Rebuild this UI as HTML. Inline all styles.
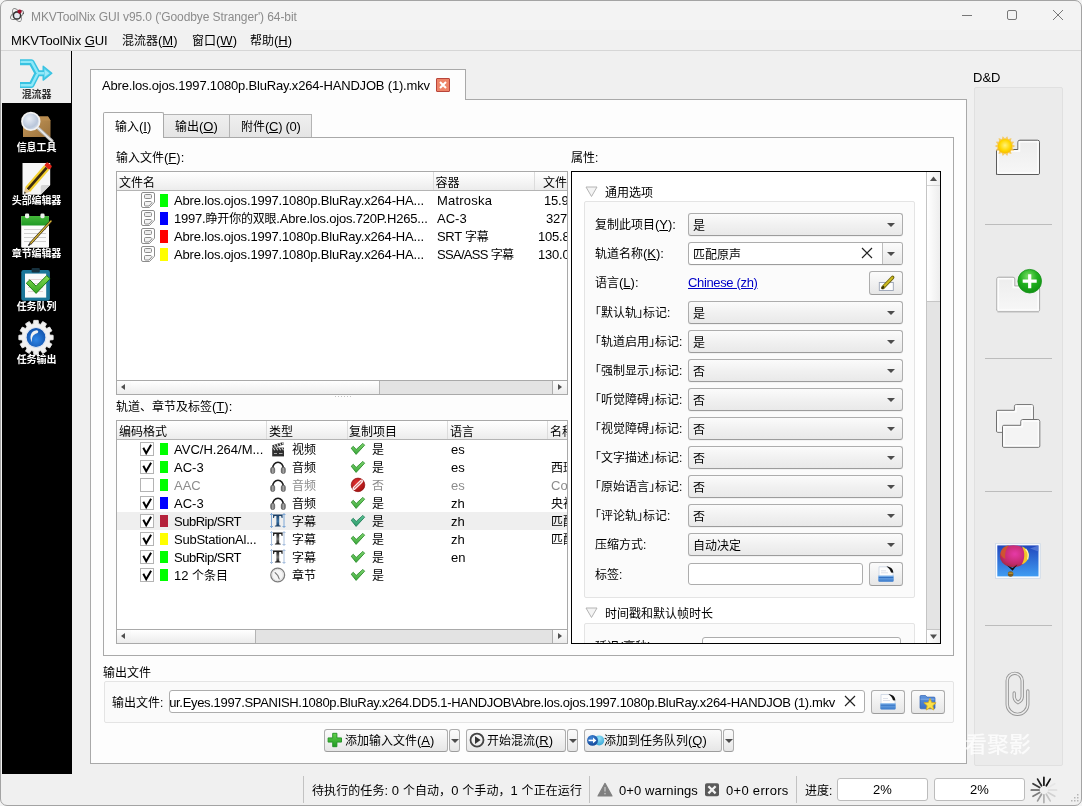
<!DOCTYPE html>
<html lang="zh-CN">
<head>
<meta charset="utf-8">
<title>MKVToolNix GUI v95.0 ('Goodbye Stranger') 64-bit</title>
<style>
html,body{margin:0;padding:0}
body{width:1082px;height:806px;position:relative;overflow:hidden;background:#f0f0f0;
 font-family:"Liberation Sans","Noto Sans CJK SC",sans-serif;font-size:12px;color:#000}
.a{position:absolute;box-sizing:border-box}
.t{position:absolute;white-space:nowrap;line-height:16px;height:16px}
.L{font-size:13px}
u{text-decoration:underline;text-underline-offset:1px}
svg{position:absolute;overflow:visible}
/* window frame */
#win{left:0;top:0;width:1082px;height:806px;background:#f0f0f0;overflow:hidden;will-change:transform}
#frame{left:0;top:0;width:1082px;height:806px;border:1px solid #a3a3a3;border-radius:7px;box-shadow:0 0 0 8px #f4f4f4;pointer-events:none}
#title{left:0;top:0;width:1082px;height:30px;background:#f3f3f3}
#menubar{left:0;top:30px;width:1082px;height:20px;background:#f1f1f1;border-bottom:1px solid #d6d6d6;height:21px}
/* sidebar */
#side{left:2px;top:51px;width:70px;height:723px;background:#000}
#sidesel{left:2px;top:51px;width:69px;height:52px;background:#efefef}
.sl{position:absolute;margin-top:1px;left:2px;width:69px;text-align:center;color:#fff;font-size:10px;font-weight:bold;line-height:14px;white-space:nowrap;letter-spacing:-0.1px}
/* panes */
.pane{background:#fdfdfd;border:1px solid #a9a9a9}
.tab{border:1px solid #b4b4b4;border-bottom:none;background:linear-gradient(#efefef,#e4e4e4)}
.tabsel{background:#fdfdfd;border:1px solid #a9a9a9;border-bottom:none}
/* lists */
.lst{background:#fff;border:1px solid #a9a9a9;overflow:hidden}
.hdr{background:linear-gradient(#ffffff,#f4f4f4 60%,#ececec);border-bottom:1px solid #b4b4b4}
.hs{top:0;width:1px;height:18px;background:#dcdcdc}
.row{position:absolute;left:0;width:450px;height:18px;white-space:nowrap;line-height:18px}
.row>span,.row>i{position:absolute;top:0;display:block}
.row>span{top:1px}
.row.sel{background:#efefef}
.row.dis{color:#8c8c8c}
.sw{left:43px;top:3px !important;width:8px;height:13px}
.c1{left:57px}.c2{left:320px}.c3{letter-spacing:-.2px}
.ty{left:175px}.cy{left:255px}.lg{left:334px}.nm{left:434px}
.dc{left:24px;top:1px !important;width:14px;height:16px}
.ti{left:153px;top:1px !important;width:16px;height:16px}
.ci{left:233px;top:1px !important;width:16px;height:16px}
.doc{left:25px;top:2px !important;width:12px;height:13px;border:1px solid #b9b9b9;border-radius:2px;box-sizing:border-box;background:#fff}
.doc:before{content:"";position:absolute;left:2px;top:2px;width:5px;height:3px;border:1px solid #c4c4c4}
.doc:after{content:"";position:absolute;right:-1px;bottom:-1px;width:4px;height:4px;background:linear-gradient(135deg,#c9c9c9 0 50%,#fff 50%)}
.cb{left:23px;top:2px !important;width:14px;height:14px;border:1px solid #b4b4b4;box-sizing:border-box;background:#fff}
.cb~.sw{height:12px}
.hsb{height:14px;background:#e3e3e3;border-top:1px solid #a9a9a9}
.hsb i{position:absolute;top:0;height:13px;display:block}
.sbl,.sbr{width:14px;background:linear-gradient(#fdfdfd,#ececec)}
.sbl{left:0;border-right:1px solid #adadad}.sbr{right:0;border-left:1px solid #adadad}
.sbl:after,.sbr:after{content:"";position:absolute;top:3px;border:3.5px solid transparent}
.sbl:after{border-right:4px solid #505050;border-left:none;left:4px}
.sbr:after{left:5px;border-left:4px solid #505050;border-right:none}
.sbt{background:linear-gradient(#ffffff,#ececec);border-right:1px solid #b4b4b4}
/* properties */
.gb{border:1px solid #e4e4e4;background:#fbfbfb;border-radius:2px}
.cmb{border:1px solid #adadad;border-bottom-color:#9c9c9c;border-radius:3px;background:linear-gradient(#fbfbfb,#f1f1f1 50%,#e9e9e9);box-shadow:0 1px 0 rgba(0,0,0,.04)}
.cmb span{position:absolute;left:4px;top:4px;line-height:16px;white-space:nowrap}
.cmb i{position:absolute;right:7px;top:9px;border:4px solid transparent;border-top:4px solid #4c4c4c;border-bottom:none;width:0;height:0}
.cmb.ed{background:#fff}
.cmb.ed b{position:absolute;right:0;top:0;width:19px;height:21px;border-left:1px solid #bdbdbd;background:linear-gradient(#fbfbfb,#e9e9e9);border-radius:0 2px 2px 0}
.fld{border:1px solid #adadad;border-radius:3px;background:#fff}
.btn{border:1px solid #adadad;border-bottom-color:#9c9c9c;border-radius:3px;background:linear-gradient(#fbfbfb,#f1f1f1 50%,#e6e6e6)}
.hb{font-feature-settings:"halt" 1}
.t{margin-top:1px}
.btn.dd i{position:absolute;left:1px;top:9px;border:4px solid transparent;border-top:4px solid #4c4c4c;border-bottom:none;width:0;height:0}
.sepl{left:985px;width:67px;height:1px;background:#bcbcbc}
.vsep{top:776px;width:1px;height:27px;background:#c2c2c2}
.pb{border:1px solid #bcbcbc;border-radius:3px;background:#fff;text-align:center;line-height:22px}
</style>
</head>
<body>
<svg width="0" height="0" style="left:0;top:0">
<defs>
 <linearGradient id="gok" x1="0" y1="0" x2="0" y2="1"><stop offset="0" stop-color="#7fd46f"/><stop offset="1" stop-color="#3aa83a"/></linearGradient>
 <linearGradient id="goks" x1="0" y1="0" x2="0" y2="1"><stop offset="0" stop-color="#5fc495"/><stop offset="1" stop-color="#2b9a6a"/></linearGradient>
 <radialGradient id="gno" cx=".4" cy=".35" r=".75"><stop offset="0" stop-color="#e03030"/><stop offset="1" stop-color="#9c0f0f"/></radialGradient>
 <linearGradient id="gcup" x1="0" y1="0" x2="1" y2="0"><stop offset="0" stop-color="#555"/><stop offset=".5" stop-color="#aaa"/><stop offset="1" stop-color="#666"/></linearGradient>
 <linearGradient id="gT" x1="0" y1="0" x2="0" y2="1"><stop offset="0" stop-color="#111"/><stop offset=".55" stop-color="#777"/><stop offset="1" stop-color="#111"/></linearGradient>
 <linearGradient id="gTs" x1="0" y1="0" x2="0" y2="1"><stop offset="0" stop-color="#16395f"/><stop offset=".55" stop-color="#3d74a6"/><stop offset="1" stop-color="#16395f"/></linearGradient>
 <symbol id="i-doc" viewBox="0 0 14 16"><path d="M2 .5h10a1.5 1.5 0 0 1 1.500 1.500v8.200l-5 5.300h-6.500a1.500 1.500 0 0 1-1.500-1.500v-12a1.500 1.500 0 0 1 1.500-1.500z" fill="#fff" stroke="#8c8c8c"/><rect x="3.500" y="2.500" width="7" height="4" rx="1" fill="#ededed" stroke="#8c8c8c"/><path d="M4.500 9.500h5.500l1 1.200-3 3.300h-3.500a1 1 0 0 1-1-1v-2.500a1 1 0 0 1 1-1z" fill="#f3f3f3" stroke="#8c8c8c"/></symbol>
 <symbol id="i-vid" viewBox="0 0 16 16"><path d="M2.200 4.300l11-3.300.8 2.600-11 3.300z" fill="#2f2f2f"/><path d="M4.300 3.800l1.300 2.400M7 3l1.300 2.400M9.700 2.200l1.300 2.400M12.300 1.400l1 2.200" stroke="#e9e9e9" stroke-width="1.100"/><rect x="2.200" y="6.600" width="11.800" height="8.800" fill="#2f2f2f"/><path d="M3.300 7l1.600 2.200M6.200 7l1.600 2.200M9.100 7l1.600 2.200M12 7l1.500 2.200" stroke="#dcdcdc" stroke-width="1.100"/><path d="M4 12.500h3M9 12.500h3.500" stroke="#a9a9a9" stroke-width="1.200"/></symbol>
 <symbol id="i-aud" viewBox="0 0 16 16"><path d="M2.700 9.500a5.300 6.300 0 0 1 10.600 0" fill="none" stroke="#1c1c1c" stroke-width="1.600"/><rect x=".7" y="8.200" width="4" height="6.300" rx="1.700" fill="url(#gcup)" stroke="#4a4a4a" stroke-width=".6"/><rect x="11.300" y="8.200" width="4" height="6.300" rx="1.700" fill="url(#gcup)" stroke="#4a4a4a" stroke-width=".6"/></symbol>
 <symbol id="i-sub" viewBox="0 0 16 16"><path d="M1.500 0v15M14 0v15M0 1.500h3M12.500 1.500h3M0 13.500h3M12.500 13.500h3" stroke="#a9c0de" stroke-width="1" fill="none"/><path d="M3 1.600h9.600v3.300h-1l-.5-1.900h-1.900v9.200l1.500.5v.9h-5.800v-.9l1.500-.5v-9.200h-1.900l-.5 1.900h-1z" fill="url(#gT)"/></symbol>
 <symbol id="i-subs" viewBox="0 0 16 16"><path d="M1.500 0v15M14 0v15M0 1.500h3M12.500 1.500h3M0 13.500h3M12.500 13.500h3" stroke="#7fa8d6" stroke-width="1" fill="none"/><path d="M3 1.600h9.600v3.300h-1l-.5-1.900h-1.900v9.200l1.500.5v.9h-5.800v-.9l1.500-.5v-9.200h-1.900l-.5 1.900h-1z" fill="url(#gTs)"/></symbol>
 <symbol id="i-chap" viewBox="0 0 16 16"><circle cx="7.700" cy="8" r="6.900" fill="#f6f6f6" stroke="#7d7d7d" stroke-width="1.300"/><circle cx="7.700" cy="8" r="5.600" fill="none" stroke="#d9d9d9" stroke-width=".8"/><path d="M7.700 8.300l-2.600-2.600M7.700 8.300l1.500 3.600" stroke="#777" stroke-width="1.100" fill="none" stroke-linecap="round"/></symbol>
 <symbol id="i-ok" viewBox="0 0 16 16"><path d="M1.200 7.200l2.100-1.900 2.900 3.200 6.700-6.100 1.700 1.800-8.500 9.200z" fill="url(#gok)" stroke="#2f8f2f" stroke-width=".9" stroke-linejoin="round"/></symbol>
 <symbol id="i-oks" viewBox="0 0 16 16"><path d="M1.200 7.200l2.100-1.900 2.900 3.200 6.700-6.100 1.700 1.800-8.500 9.200z" fill="url(#goks)" stroke="#23805a" stroke-width=".9" stroke-linejoin="round"/></symbol>
 <symbol id="i-no" viewBox="0 0 16 16"><circle cx="8" cy="7.900" r="6.800" fill="url(#gno)" stroke="#8e0d0d" stroke-width=".7"/><path d="M4.200 11.200l7.200-7.000" stroke="#fbeaea" stroke-width="3.400" stroke-linecap="round"/><path d="M4.400 11.000l6.800-6.600" stroke="#c62222" stroke-width=".9" stroke-linecap="round"/></symbol>
</defs></svg>
<div id="win" class="a">

<!-- title bar -->
<div id="title" class="a"></div>
<div class="t" style="left:31px;top:8px;color:#8b8b8b;font-size:12px;letter-spacing:-0.09px">MKVToolNix GUI v95.0 ('Goodbye Stranger') 64-bit</div>
<svg style="left:955px;top:5px" width="120" height="20" viewBox="0 0 120 20" fill="none" stroke="#777" stroke-width="1">
 <path d="M7 10.5h10"/><rect x="52.5" y="5.5" width="9" height="9" rx="1.5"/><path d="M98 5l10 10M108 5l-10 10"/>
</svg>

<!-- menu bar -->
<div id="menubar" class="a"></div>
<div class="t L" style="left:11px;top:32px;letter-spacing:-0.07px">MKVToolNix <u>G</u>UI</div>
<div class="t" style="left:122px;top:32px">混流器<span class="L">(<u>M</u>)</span></div>
<div class="t" style="left:192px;top:32px">窗口<span class="L">(<u>W</u>)</span></div>
<div class="t" style="left:250px;top:32px">帮助<span class="L">(<u>H</u>)</span></div>

<!-- sidebar -->
<div id="side" class="a"></div>
<div id="sidesel" class="a"></div>
<div class="sl" style="top:87px;color:#333">混流器</div>
<div class="sl" style="top:140px">信息工具</div>
<div class="sl" style="top:193px">头部编辑器</div>
<div class="sl" style="top:246px">章节编辑器</div>
<div class="sl" style="top:299px">任务队列</div>
<div class="sl" style="top:352px">任务输出</div>
<svg style="left:0;top:0" width="72" height="400" viewBox="0 0 72 400">
<defs>
 <linearGradient id="gcy" x1="0" y1="0" x2="0" y2="1"><stop offset="0" stop-color="#7fe3f6"/><stop offset="1" stop-color="#3cc6e4"/></linearGradient>
 <linearGradient id="gbox" x1="0" y1="0" x2="1" y2="1"><stop offset="0" stop-color="#c79a5b"/><stop offset="1" stop-color="#9a713c"/></linearGradient>
 <radialGradient id="glens" cx=".4" cy=".35" r=".7"><stop offset="0" stop-color="#e9eef6"/><stop offset=".7" stop-color="#b9c6da"/><stop offset="1" stop-color="#dfe5ee"/></radialGradient>
 <linearGradient id="ggrn" x1="0" y1="0" x2="0" y2="1"><stop offset="0" stop-color="#46b83a"/><stop offset="1" stop-color="#1f9a25"/></linearGradient>
 <linearGradient id="gchk" x1="0" y1="0" x2="0" y2="1"><stop offset="0" stop-color="#8ade58"/><stop offset="1" stop-color="#2fa31c"/></linearGradient>
 <radialGradient id="gblu" cx=".5" cy=".6" r=".6"><stop offset="0" stop-color="#2f86e6"/><stop offset="1" stop-color="#0f4fa8"/></radialGradient>
</defs>
<!-- merge -->
<g fill="none" stroke-linejoin="round" stroke-linecap="butt">
 <path d="M20 62.200h11.500l6 11M20 85h11.500l6-11.800M37 73.200h7" stroke="#38c3e2" stroke-width="6"/>
 <path d="M43.2 66.3l8.6 6.9-8.6 6.9z" fill="#56d0ea" stroke="#38c3e2" stroke-width="1.4"/>
 <path d="M20.500 61.900h11.200l6 11.100M20.500 85.300h11.200l5.600-11M37 73.200h7" stroke="#8fe8f8" stroke-width="2.400"/>
 <path d="M44.6 69.4l4.8 3.8-4.8 3.8z" fill="#9deafa" stroke="none"/>
</g>
<!-- info tool -->
<path d="M23 116.5h25l2.5 4v16.5h-27.5z" fill="url(#gbox)"/>
<path d="M23 116.5h25l2.5 4h-27.5z" fill="#b98c50"/>
<path d="M38 128l14 13" stroke="#b9b9b9" stroke-width="3.2" stroke-linecap="round"/>
<path d="M38 128l14 13" stroke="#efefef" stroke-width="1.2" stroke-linecap="round"/>
<circle cx="30.8" cy="121.4" r="8.8" fill="url(#glens)" stroke="#f2f2f2" stroke-width="1.8"/>
<!-- header editor -->
<path d="M22.5 163h27.7v22l-9.5 9.7h-18.2z" fill="#f6f6f6"/>
<path d="M50.2 185l-9.5 9.7v-7.5a2 2 0 0 1 2-2.2z" fill="#d4d4d4"/>
<g transform="rotate(-49 38.5 177)">
 <rect x="22" y="173.6" width="29" height="6.8" fill="#f3cf2b"/>
 <rect x="22" y="175.7" width="29" height="2.6" fill="#3a2a12"/>
 <rect x="51" y="173.6" width="4.6" height="6.8" rx="1.2" fill="#e02418"/>
 <path d="M22 173.6l-5.6 3.4 5.6 3.4z" fill="#e7c88f"/>
 <path d="M18.4 175.8l-2 1.2 2 1.2z" fill="#333"/>
</g>
<!-- chapter editor -->
<rect x="21.2" y="216" width="27.8" height="31.8" rx="1.2" fill="#fbfbfb"/>
<path d="M21.2 225.4v-8.2a1.2 1.2 0 0 1 1.2-1.2h25.4a1.2 1.2 0 0 1 1.2 1.2v8.2z" fill="url(#ggrn)"/>
<rect x="25" y="213.6" width="4.2" height="4.6" rx="1.4" fill="#eef3ee"/><rect x="40.4" y="213.6" width="4.2" height="4.6" rx="1.4" fill="#eef3ee"/>
<path d="M24 229.5h22M24 233.5h22M24 237.5h22M24 241.5h22" stroke="#cfcfcf" stroke-width="1.1"/>
<path d="M51.4 220.6l-21.3 23.3" stroke="#3a2a12" stroke-width="2.4"/>
<path d="M51.4 220.6l-21.3 23.3" stroke="#e8c63a" stroke-width="1.1"/>
<path d="M30.4 243.5l-2 2.2" stroke="#222" stroke-width="1.6"/>
<!-- job queue -->
<rect x="21.3" y="270" width="28.6" height="30.8" rx="2.2" fill="#1b7699"/>
<rect x="25" y="273.6" width="21.2" height="24" fill="#fafafa"/>
<rect x="31.6" y="268" width="8.2" height="4.6" rx="1" fill="#17313e"/>
<path d="M28 279.5h15M28 283.5h15M28 287.5h15M28 291.5h15" stroke="#e3d4d4" stroke-width="1"/>
<path d="M26.3 283.2l3.6-3.4 6.2 6.4 10.6-10.6 3.4 3.2-14 14.6z" fill="url(#gchk)" stroke="#1d7d14" stroke-width="1"/>
<!-- job output -->
<path d="M49.8 335.1 L53.1 335.3 L53.1 339.7 L49.8 339.9 L49.1 342.3 L51.9 344.2 L49.7 347.9 L46.7 346.5 L45.0 348.2 L46.4 351.2 L42.7 353.4 L40.8 350.6 L38.4 351.3 L38.2 354.6 L33.8 354.6 L33.6 351.3 L31.2 350.6 L29.3 353.4 L25.6 351.2 L27.0 348.2 L25.3 346.5 L22.3 347.9 L20.1 344.2 L22.9 342.3 L22.2 339.9 L18.9 339.7 L18.9 335.3 L22.2 335.1 L22.9 332.7 L20.1 330.8 L22.3 327.1 L25.3 328.5 L27.0 326.8 L25.6 323.8 L29.3 321.6 L31.2 324.4 L33.6 323.7 L33.8 320.4 L38.2 320.4 L38.4 323.7 L40.8 324.4 L42.7 321.6 L46.4 323.8 L45.0 326.8 L46.7 328.5 L49.7 327.1 L51.9 330.8 L49.1 332.7Z" fill="#f1f1f1" stroke="#e4e4e4" stroke-width="1" stroke-linejoin="round"/>
<circle cx="36" cy="337.5" r="10" fill="url(#gblu)" stroke="#dfe6f2" stroke-width="1.2"/>
<path d="M36.6 330.2c-5.6.6-7.8 6.4-4.6 12.2-.6-5 1.2-8.2 5-9.2 1.6-.6 1.8-2.8-.4-3z" fill="#f3f3f3"/>
</svg>


<!-- outer tab widget -->
<div class="a pane" style="left:90px;top:99px;width:877px;height:665px"></div>
<div class="a tabsel" style="left:90px;top:69px;width:376px;height:31px"></div>
<div class="t L" style="left:102px;top:77px;letter-spacing:-0.18px">Abre.los.ojos.1997.1080p.BluRay.x264-HANDJOB (1).mkv</div>
<div class="a" style="left:436px;top:78px;width:14px;height:14px;background:#ee8468;border:1px solid #b8443a;border-radius:1px"></div>
<svg style="left:436px;top:78px" width="14" height="14" viewBox="0 0 14 14" stroke="#fff" stroke-width="2" fill="none"><path d="M4 4l6 6M10 4l-6 6"/></svg>

<!-- inner tab widget -->
<div class="a pane" style="left:103px;top:137px;width:851px;height:519px"></div>
<div class="a tab" style="left:163px;top:114px;width:67px;height:23px"></div>
<div class="a tab" style="left:229px;top:114px;width:83px;height:23px"></div>
<div class="a tabsel" style="left:103px;top:112px;width:61px;height:26px;border-radius:2px 2px 0 0"></div>
<div class="t" style="left:115px;top:118px">输入<span class="L">(<u>I</u>)</span></div>
<div class="t" style="left:175px;top:118px">输出<span class="L">(<u>O</u>)</span></div>
<div class="t" style="left:241px;top:118px">附件<span class="L" style="letter-spacing:-.3px">(<u>C</u>) (0)</span></div>

<!-- input files list -->
<div class="t" style="left:116px;top:149px">输入文件<span class="L">(<u>F</u>):</span></div>
<div class="t" style="left:571px;top:149px">属性:</div>
<div class="a lst" style="left:116px;top:171px;width:452px;height:224px">
 <div class="a hdr" style="left:0;top:0;width:450px;height:19px"></div>
 <div class="a hs" style="left:316px"></div><div class="a hs" style="left:417px"></div>
 <div class="t" style="left:2px;top:2px">文件名</div>
 <div class="t" style="left:318.5px;top:2px">容器</div>
 <div class="t" style="left:426px;top:2px">文件</div>
 <div class="row" style="top:19px"><i class="dc"><svg width="14" height="16" style="left:0;top:0"><use href="#i-doc"/></svg></i><i class="sw" style="background:#00ff00"></i><span class="c1 L" style="letter-spacing:-0.17px">Abre.los.ojos.1997.1080p.BluRay.x264-HA...</span><span class="c2 L" style="letter-spacing:.2px">Matroska</span><span class="c3 L" style="left:427px">15.9 GiB</span></div>
 <div class="row" style="top:37px"><i class="dc"><svg width="14" height="16" style="left:0;top:0"><use href="#i-doc"/></svg></i><i class="sw" style="background:#0000ff"></i><span class="c1 L" style="letter-spacing:-0.2px">1997.<span style="font-size:12px">睁开你的双眼</span>.Abre.los.ojos.720P.H265...</span><span class="c2 L">AC-3</span><span class="c3 L" style="left:429px">327.4 MiB</span></div>
 <div class="row" style="top:55px"><i class="dc"><svg width="14" height="16" style="left:0;top:0"><use href="#i-doc"/></svg></i><i class="sw" style="background:#ff0000"></i><span class="c1 L" style="letter-spacing:-0.17px">Abre.los.ojos.1997.1080p.BluRay.x264-HA...</span><span class="c2 L" style="letter-spacing:-.3px">SRT <span style="font-size:12px">字幕</span></span><span class="c3 L" style="left:421px">105.8 KiB</span></div>
 <div class="row" style="top:73px"><i class="dc"><svg width="14" height="16" style="left:0;top:0"><use href="#i-doc"/></svg></i><i class="sw" style="background:#ffff00"></i><span class="c1 L" style="letter-spacing:-0.17px">Abre.los.ojos.1997.1080p.BluRay.x264-HA...</span><span class="c2 L" style="letter-spacing:-.7px">SSA/ASS <span style="font-size:12px">字幕</span></span><span class="c3 L" style="left:421px">130.0 KiB</span></div>
 <div class="a hsb" style="left:0;top:208px;width:450px"><i class="sbl"></i><i class="sbt" style="left:14px;width:248px"></i><i class="sbr"></i></div>
</div>
<!-- splitter dots -->
<div class="a" style="left:335px;top:396px;width:18px;height:1px;background:repeating-linear-gradient(90deg,#c4c4c4 0 1px,transparent 1px 3px)"></div>

<!-- tracks list -->
<div class="t" style="left:116px;top:398px">轨道、章节及标签<span class="L">(<u>T</u>):</span></div>
<div class="a lst" style="left:116px;top:420px;width:452px;height:224px">
 <div class="a hdr" style="left:0;top:0;width:450px;height:19px"></div>
 <div class="a hs" style="left:149px"></div><div class="a hs" style="left:230px"></div><div class="a hs" style="left:330px"></div><div class="a hs" style="left:430px"></div>
 <div class="t" style="left:2px;top:2px">编码格式</div>
 <div class="t" style="left:152px;top:2px">类型</div>
 <div class="t" style="left:232px;top:2px">复制项目</div>
 <div class="t" style="left:333px;top:2px">语言</div>
 <div class="t" style="left:433px;top:2px">名称</div>
 <div class="row" style="top:19px"><i class="cb on"><svg width="12" height="12" viewBox="0 0 12 12" style="left:0;top:0"><path d="M2.300 4.800l2.900 5.400 4.900-8.400" fill="none" stroke="#000" stroke-width="2" stroke-linejoin="miter"/></svg></i><i class="sw" style="background:#00ff00"></i><span class="c1 L">AVC/H.264/M...</span><i class="ti"><svg width="16" height="16" style="left:0;top:0"><use href="#i-vid"/></svg></i><span class="ty">视频</span><i class="ci"><svg width="16" height="16" style="left:0;top:0"><use href="#i-ok"/></svg></i><span class="cy">是</span><span class="lg L">es</span></div>
 <div class="row" style="top:37px"><i class="cb on"><svg width="12" height="12" viewBox="0 0 12 12" style="left:0;top:0"><path d="M2.300 4.800l2.900 5.400 4.900-8.400" fill="none" stroke="#000" stroke-width="2" stroke-linejoin="miter"/></svg></i><i class="sw" style="background:#00ff00"></i><span class="c1 L">AC-3</span><i class="ti"><svg width="16" height="16" style="left:0;top:0"><use href="#i-aud"/></svg></i><span class="ty">音频</span><i class="ci"><svg width="16" height="16" style="left:0;top:0"><use href="#i-ok"/></svg></i><span class="cy">是</span><span class="lg L">es</span><span class="nm">西班牙语</span></div>
 <div class="row dis" style="top:55px"><i class="cb"></i><i class="sw" style="background:#00ff00"></i><span class="c1 L">AAC</span><i class="ti"><svg width="16" height="16" style="left:0;top:0"><use href="#i-aud"/></svg></i><span class="ty">音频</span><i class="ci"><svg width="16" height="16" style="left:0;top:0"><use href="#i-no"/></svg></i><span class="cy">否</span><span class="lg L">es</span><span class="nm L">Commentary</span></div>
 <div class="row" style="top:73px"><i class="cb on"><svg width="12" height="12" viewBox="0 0 12 12" style="left:0;top:0"><path d="M2.300 4.800l2.900 5.400 4.900-8.400" fill="none" stroke="#000" stroke-width="2" stroke-linejoin="miter"/></svg></i><i class="sw" style="background:#0000ff"></i><span class="c1 L">AC-3</span><i class="ti"><svg width="16" height="16" style="left:0;top:0"><use href="#i-aud"/></svg></i><span class="ty">音频</span><i class="ci"><svg width="16" height="16" style="left:0;top:0"><use href="#i-ok"/></svg></i><span class="cy">是</span><span class="lg L">zh</span><span class="nm">央视国语</span></div>
 <div class="row sel" style="top:91px"><i class="cb on"><svg width="12" height="12" viewBox="0 0 12 12" style="left:0;top:0"><path d="M2.300 4.800l2.900 5.400 4.900-8.400" fill="none" stroke="#000" stroke-width="2" stroke-linejoin="miter"/></svg></i><i class="sw" style="background:#b5223c"></i><span class="c1 L" style="letter-spacing:-.5px">SubRip/SRT</span><i class="ti"><svg width="16" height="16" style="left:0;top:0"><use href="#i-subs"/></svg></i><span class="ty">字幕</span><i class="ci"><svg width="16" height="16" style="left:0;top:0"><use href="#i-oks"/></svg></i><span class="cy">是</span><span class="lg L">zh</span><span class="nm">匹配原声</span></div>
 <div class="row" style="top:109px"><i class="cb on"><svg width="12" height="12" viewBox="0 0 12 12" style="left:0;top:0"><path d="M2.300 4.800l2.900 5.400 4.900-8.400" fill="none" stroke="#000" stroke-width="2" stroke-linejoin="miter"/></svg></i><i class="sw" style="background:#ffff00"></i><span class="c1 L" style="letter-spacing:-.25px">SubStationAl...</span><i class="ti"><svg width="16" height="16" style="left:0;top:0"><use href="#i-sub"/></svg></i><span class="ty">字幕</span><i class="ci"><svg width="16" height="16" style="left:0;top:0"><use href="#i-ok"/></svg></i><span class="cy">是</span><span class="lg L">zh</span><span class="nm">匹配央视</span></div>
 <div class="row" style="top:127px"><i class="cb on"><svg width="12" height="12" viewBox="0 0 12 12" style="left:0;top:0"><path d="M2.300 4.800l2.900 5.400 4.900-8.400" fill="none" stroke="#000" stroke-width="2" stroke-linejoin="miter"/></svg></i><i class="sw" style="background:#00ff00"></i><span class="c1 L" style="letter-spacing:-.5px">SubRip/SRT</span><i class="ti"><svg width="16" height="16" style="left:0;top:0"><use href="#i-sub"/></svg></i><span class="ty">字幕</span><i class="ci"><svg width="16" height="16" style="left:0;top:0"><use href="#i-ok"/></svg></i><span class="cy">是</span><span class="lg L">en</span></div>
 <div class="row" style="top:145px"><i class="cb on"><svg width="12" height="12" viewBox="0 0 12 12" style="left:0;top:0"><path d="M2.300 4.800l2.900 5.400 4.900-8.400" fill="none" stroke="#000" stroke-width="2" stroke-linejoin="miter"/></svg></i><i class="sw" style="background:#00ff00"></i><span class="c1 L">12 <span style="font-size:12px">个条目</span></span><i class="ti"><svg width="16" height="16" style="left:0;top:0"><use href="#i-chap"/></svg></i><span class="ty">章节</span><i class="ci"><svg width="16" height="16" style="left:0;top:0"><use href="#i-ok"/></svg></i><span class="cy">是</span></div>
 <div class="a hsb" style="left:0;top:208px;width:450px"><i class="sbl"></i><i class="sbt" style="left:14px;width:124px"></i><i class="sbr"></i></div>
</div>

<!-- properties panel -->
<div class="a" id="props" style="left:571px;top:171px;width:370px;height:473px;border:1px solid #000;background:#fff;overflow:hidden">
<div class="a" style="left:-572px;top:-172px;width:0;height:0">
 <svg style="left:585px;top:186px" width="13" height="12" viewBox="0 0 13 12"><path d="M1 1h11l-5.5 9.5z" fill="#f4f4f4" stroke="#b4b4b4"/></svg>
 <div class="t" style="left:605px;top:184px">通用选项</div>
 <div class="a gb" style="left:584px;top:201px;width:331px;height:397px"></div>
 <div class="t" style="left:595px;top:216px">复制此项目<span class="L">(<u>Y</u>):</span></div><div class="a cmb" style="left:688px;top:213px;width:215px;height:23px"><span>是</span><i></i></div>
 <div class="t" style="left:595px;top:304px"><span class="hb">「</span>默认轨<span class="hb">」</span>标记:</div><div class="a cmb" style="left:688px;top:301px;width:215px;height:23px"><span>是</span><i></i></div>
 <div class="t" style="left:595px;top:333px"><span class="hb">「</span>轨道启用<span class="hb">」</span>标记:</div><div class="a cmb" style="left:688px;top:330px;width:215px;height:23px"><span>是</span><i></i></div>
 <div class="t" style="left:595px;top:362px"><span class="hb">「</span>强制显示<span class="hb">」</span>标记:</div><div class="a cmb" style="left:688px;top:359px;width:215px;height:23px"><span>否</span><i></i></div>
 <div class="t" style="left:595px;top:391px"><span class="hb">「</span>听觉障碍<span class="hb">」</span>标记:</div><div class="a cmb" style="left:688px;top:388px;width:215px;height:23px"><span>否</span><i></i></div>
 <div class="t" style="left:595px;top:420px"><span class="hb">「</span>视觉障碍<span class="hb">」</span>标记:</div><div class="a cmb" style="left:688px;top:417px;width:215px;height:23px"><span>否</span><i></i></div>
 <div class="t" style="left:595px;top:449px"><span class="hb">「</span>文字描述<span class="hb">」</span>标记:</div><div class="a cmb" style="left:688px;top:446px;width:215px;height:23px"><span>否</span><i></i></div>
 <div class="t" style="left:595px;top:478px"><span class="hb">「</span>原始语言<span class="hb">」</span>标记:</div><div class="a cmb" style="left:688px;top:475px;width:215px;height:23px"><span>否</span><i></i></div>
 <div class="t" style="left:595px;top:507px"><span class="hb">「</span>评论轨<span class="hb">」</span>标记:</div><div class="a cmb" style="left:688px;top:504px;width:215px;height:23px"><span>否</span><i></i></div>
 <div class="t" style="left:595px;top:536px">压缩方式:</div><div class="a cmb" style="left:688px;top:533px;width:215px;height:23px"><span>自动决定</span><i></i></div>
 <div class="t" style="left:595px;top:245px">轨道名称<span class="L">(<u>K</u>):</span></div>
 <div class="a cmb ed" style="left:688px;top:242px;width:215px;height:23px"><span>匹配原声</span><b></b><i></i></div>
 <svg style="left:861px;top:247px" width="12" height="12" viewBox="0 0 12 12" stroke="#222" stroke-width="1.2" fill="none"><path d="M1 1l10 10M11 1l-10 10"/></svg>
 <div class="t" style="left:595px;top:274px">语言<span class="L">(<u>L</u>):</span></div>
 <div class="t L" style="left:688px;top:274px;color:#0000c8;text-decoration:underline;letter-spacing:-.35px">Chinese (zh)</div>
 <div class="a btn" style="left:869px;top:271px;width:34px;height:24px"></div>
 <div class="t" style="left:595px;top:566px">标签:</div>
 <div class="a fld" style="left:688px;top:563px;width:175px;height:22px"></div>
 <div class="a btn" style="left:869px;top:562px;width:34px;height:24px"></div>
 <svg style="left:585px;top:607px" width="13" height="12" viewBox="0 0 13 12"><path d="M1 1h11l-5.5 9.5z" fill="#f4f4f4" stroke="#b4b4b4"/></svg>
 <div class="t" style="left:605px;top:605px">时间戳和默认帧时长</div>
 <div class="a gb" style="left:584px;top:623px;width:331px;height:60px"></div>
 <div class="t" style="left:595px;top:638px">延迟<span class="L">(</span>毫秒<span class="L">):</span></div>
 <div class="a fld" style="left:702px;top:637px;width:199px;height:23px"></div>
 <!-- vertical scrollbar -->
 <div class="a" style="left:926px;top:172px;width:14px;height:471px;background:#e4e4e4;border-left:1px solid #c4c4c4"></div>
 <div class="a" style="left:927px;top:172px;width:13px;height:130px;background:linear-gradient(90deg,#fff,#ededed);border-bottom:1px solid #c6c6c6"></div>
 <div class="a" style="left:927px;top:185px;width:13px;height:1px;background:#d4d4d4"></div>
 <div class="a" style="left:927px;top:629px;width:13px;height:14px;background:linear-gradient(90deg,#fff,#ededed);border-top:1px solid #c6c6c6"></div>
 <svg style="left:927px;top:172px" width="13" height="13" viewBox="0 0 13 13"><path d="M3 9l3.5-4.5L10 9z" fill="#505050"/></svg>
 <svg style="left:927px;top:630px" width="13" height="13" viewBox="0 0 13 13"><path d="M3 4.5l3.5 4.5L10 4.5z" fill="#505050"/></svg>
</div>
</div>

<!-- output file -->
<div class="t" style="left:103px;top:664px">输出文件</div>
<div class="a gb" style="left:104px;top:681px;width:850px;height:42px;background:#fafafa"></div>
<div class="t" style="left:112px;top:694px">输出文件:</div>
<div class="a fld" style="left:169px;top:690px;width:696px;height:23px;overflow:hidden"><div class="t L" id="outp" style="right:29px;top:3px;letter-spacing:-.32px">C:\Movies\Open.Your.Eyes.1997.SPANISH.1080p.BluRay.x264.DD5.1-HANDJOB\Abre.los.ojos.1997.1080p.BluRay.x264-HANDJOB (1).mkv</div></div>
<svg style="left:844px;top:695px" width="12" height="12" viewBox="0 0 12 12" stroke="#222" stroke-width="1.2" fill="none"><path d="M1 1l10 10M11 1l-10 10"/></svg>
<div class="a btn" style="left:871px;top:690px;width:34px;height:24px"></div>
<div class="a btn" style="left:911px;top:690px;width:34px;height:24px"></div>

<!-- bottom buttons -->
<div class="a btn" style="left:324px;top:729px;width:124px;height:23px"></div>
<div class="a btn dd" style="left:449px;top:729px;width:11px;height:23px"><i></i></div>
<div class="a btn" style="left:466px;top:729px;width:100px;height:23px"></div>
<div class="a btn dd" style="left:567px;top:729px;width:11px;height:23px"><i></i></div>
<div class="a btn" style="left:584px;top:729px;width:138px;height:23px"></div>
<div class="a btn dd" style="left:723px;top:729px;width:11px;height:23px"><i></i></div>
<div class="t" style="left:345px;top:732px">添加输入文件<span class="L">(<u>A</u>)</span></div>
<div class="t" style="left:487px;top:732px">开始混流<span class="L">(<u>R</u>)</span></div>
<div class="t" style="left:604px;top:732px">添加到任务队列<span class="L">(<u>Q</u>)</span></div>

<!-- D&D panel -->
<div class="t L" style="left:973px;top:69px">D&amp;D</div>
<div class="a" style="left:974px;top:87px;width:89px;height:679px;background:#ebebeb;border:1px solid #e0e0e0;border-radius:2px"></div>
<div class="a sepl" style="top:224px"></div><div class="a sepl" style="top:358px"></div><div class="a sepl" style="top:491px"></div><div class="a sepl" style="top:625px"></div>
<div class="t" style="left:965px;top:732px;font-size:22px;line-height:24px;height:24px;color:#fff;font-weight:500;opacity:.8">看聚影</div>

<!-- status bar -->
<div class="a vsep" style="left:303px"></div><div class="a vsep" style="left:589px"></div><div class="a vsep" style="left:796px"></div>
<div class="t" style="left:312px;top:782px;letter-spacing:.08px">待执行的任务<span class="L">: 0 </span>个自动，<span class="L">0 </span>个手动，<span class="L">1 </span>个正在运行</div>
<div class="t L" style="left:619px;top:782px;letter-spacing:.1px">0+0 warnings</div>
<div class="t L" style="left:726px;top:782px;letter-spacing:.3px">0+0 errors</div>
<div class="t" style="left:805px;top:782px">进度:</div>
<div class="a pb" style="left:837px;top:778px;width:91px;height:23px"><span class="L">2%</span></div>
<div class="a pb" style="left:934px;top:778px;width:91px;height:23px"><span class="L">2%</span></div>
<svg style="left:0;top:0" width="1082" height="806" viewBox="0 0 1082 806">
<defs>
 <radialGradient id="gsun" cx=".5" cy=".45" r=".6"><stop offset="0" stop-color="#fff27a"/><stop offset=".6" stop-color="#ffd800"/><stop offset="1" stop-color="#f5b400"/></radialGradient>
 <linearGradient id="gdoc" x1="0" y1="0" x2="0" y2="1"><stop offset="0" stop-color="#ededed"/><stop offset="1" stop-color="#f7f7f7"/></linearGradient>
 <radialGradient id="ggplus" cx=".45" cy=".3" r=".8"><stop offset="0" stop-color="#7de06a"/><stop offset=".45" stop-color="#22b020"/><stop offset="1" stop-color="#0c8a10"/></radialGradient>
 <linearGradient id="gsky" x1="0" y1="0" x2="0" y2="1"><stop offset="0" stop-color="#2146bd"/><stop offset="1" stop-color="#3f9cf2"/></linearGradient>
 <radialGradient id="gbal" cx=".55" cy=".4" r=".65"><stop offset="0" stop-color="#e63aa8"/><stop offset=".7" stop-color="#c22a6a"/><stop offset="1" stop-color="#9a2c3a"/></radialGradient>
 <linearGradient id="gtray" x1="0" y1="0" x2="0" y2="1"><stop offset="0" stop-color="#7db2ea"/><stop offset="1" stop-color="#3a7acb"/></linearGradient>
 <linearGradient id="gfold" x1="0" y1="0" x2="0" y2="1"><stop offset="0" stop-color="#5d94de"/><stop offset="1" stop-color="#3a6fc4"/></linearGradient>
 <linearGradient id="gplus" x1="0" y1="0" x2="0" y2="1"><stop offset="0" stop-color="#63d24c"/><stop offset="1" stop-color="#1f9a22"/></linearGradient>
 <radialGradient id="gq1" cx=".4" cy=".3" r=".8"><stop offset="0" stop-color="#3f86d8"/><stop offset="1" stop-color="#0d3f90"/></radialGradient>
 <radialGradient id="gq2" cx=".5" cy=".3" r=".8"><stop offset="0" stop-color="#8fe0f6"/><stop offset="1" stop-color="#2e9ed2"/></radialGradient>
</defs>
<!-- app icon -->
<g fill="none"><ellipse cx="17" cy="15" rx="7.200" ry="3.400" transform="rotate(-28 17 15)" stroke="#777" stroke-width=".9"/><ellipse cx="17" cy="15" rx="7.200" ry="3.400" transform="rotate(62 17 15)" stroke="#888" stroke-width=".9"/><circle cx="17" cy="15.500" r="3.600" stroke="#333" stroke-width="1.500" fill="#e6eaf0"/><circle cx="19.600" cy="11.600" r="2.100" fill="#a00d2a"/><circle cx="23.200" cy="13.200" r=".7" fill="#444"/></g>
<!-- edit button icon -->
<rect x="879.300" y="282.500" width="14" height="8" fill="#fdfdfd" stroke="#9aa3b5" stroke-width=".9"/>
<path d="M892.600 277.400l-9.600 10" stroke="#6e6410" stroke-width="3.600" stroke-linecap="round"/><path d="M892.400 277.600l-9 9.400" stroke="#cdbb20" stroke-width="2" stroke-linecap="round"/><path d="M883.400 286.800l-1.200 1.400" stroke="#3a3208" stroke-width="1.800" stroke-linecap="round"/>
<!-- open icons -->
<g transform="translate(878 566.3)"><path d="M1 .5h8.500l5.500 5v9.500h-14z" fill="#fdfdfd" stroke="#c9d3e2" stroke-width=".8"/><path d="M8.500 .3c3.500 0 6.800 2.200 6.800 6.200l-2.300-.2c-.6-2.600-2.300-4.600-4.500-6z" fill="#111"/><path d="M3 4.500h5M3 6.500h7" stroke="#d9dde6" stroke-width=".9"/><path d="M.3 9.200h15.400v5a1.200 1.200 0 0 1-1.200 1.200h-13a1.200 1.200 0 0 1-1.200-1.200z" fill="url(#gtray)"/><path d="M.8 11.200h14.400" stroke="#2f6dbe" stroke-width=".9"/></g>
<g transform="translate(880 694)"><path d="M1 .5h8.500l5.500 5v9.500h-14z" fill="#fdfdfd" stroke="#c9d3e2" stroke-width=".8"/><path d="M8.500 .3c3.500 0 6.800 2.200 6.800 6.200l-2.300-.2c-.6-2.600-2.300-4.600-4.500-6z" fill="#111"/><path d="M3 4.500h5M3 6.500h7" stroke="#d9dde6" stroke-width=".9"/><path d="M.3 9.200h15.400v5a1.200 1.200 0 0 1-1.200 1.200h-13a1.200 1.200 0 0 1-1.200-1.200z" fill="url(#gtray)"/><path d="M.8 11.200h14.400" stroke="#2f6dbe" stroke-width=".9"/></g>
<!-- favourite folder -->
<path d="M920 696.500a1 1 0 0 1 1-1h4.500l1.500 1.600h7a1 1 0 0 1 1 1v9.700a1 1 0 0 1-1 1h-13a1 1 0 0 1-1-1z" fill="url(#gfold)" stroke="#3563b0" stroke-width=".7"/><path d="M920.500 699.200h14" stroke="#8fb6ea" stroke-width=".8"/>
<path d="M930.0 698.4 L931.7 702.5 L936.1 702.8 L932.8 705.7 L933.8 710.0 L930.0 707.7 L926.2 710.0 L927.2 705.7 L923.9 702.8 L928.3 702.5Z" fill="#fbe24a" stroke="#d8a81a" stroke-width=".8" stroke-linejoin="round"/>
<!-- bottom button icons -->
<path d="M332.700 733.300h4.200v4.600h4.600v4.200h-4.600v4.600h-4.200v-4.600h-4.600v-4.200h4.600z" fill="url(#gplus)" stroke="#1f8f22" stroke-width=".9" stroke-linejoin="round"/>
<circle cx="477" cy="740.100" r="6.500" fill="none" stroke="#444" stroke-width="1.800"/><path d="M475 736.300l5.600 3.800-5.600 3.800z" fill="#333"/>
<circle cx="599.200" cy="740.400" r="5" fill="url(#gq2)"/><circle cx="592.500" cy="740.400" r="5.400" fill="url(#gq1)"/><path d="M588.500 740.400h5" stroke="#fff" stroke-width="1.600"/><path d="M593 737.600l3.400 2.800-3.400 2.800z" fill="#fff"/>
<!-- D&D icons -->
<path d="M996.500 174.500v-23.500a1.500 1.500 0 0 1 1.500-1.500h19.900v-7.300a2 2 0 0 1 2-2h17.600a2 2 0 0 1 2 2v30.800a1.500 1.500 0 0 1-1.500 1.500h-40a1.500 1.500 0 0 1-1.500-1.500z" fill="url(#gdoc)" stroke="#5c5c5c" stroke-width="1"/>
<path d="M998 173v-22h21.400v-9.300h18.600v31.300z" fill="none" stroke="#fdfdfd" stroke-width="1.600"/>
<path d="M1015.2 146.1 L1012.4 147.8 L1014.2 150.5 L1010.9 150.8 L1011.4 154.1 L1008.3 152.9 L1007.3 156.0 L1005.0 153.7 L1002.7 156.0 L1001.7 152.9 L998.6 154.1 L999.1 150.8 L995.8 150.5 L997.6 147.8 L994.8 146.1 L997.6 144.4 L995.8 141.7 L999.1 141.4 L998.6 138.1 L1001.7 139.3 L1002.7 136.2 L1005.0 138.5 L1007.3 136.2 L1008.3 139.3 L1011.4 138.1 L1010.9 141.4 L1014.2 141.7 L1012.4 144.4Z" fill="#f7c44a" opacity=".85"/><circle cx="1005" cy="146.1" r="7.2" fill="url(#gsun)"/>
<path d="M996.800 310v-31a1.800 1.800 0 0 1 1.800-1.800h14.400a1.800 1.800 0 0 1 1.800 1.800v7h23a1.800 1.800 0 0 1 1.800 1.800v22a1.500 1.500 0 0 1-1.500 1.500h-39.800a1.500 1.500 0 0 1-1.500-1.500z" fill="url(#gdoc)" stroke="#a9a9a9" stroke-width="1"/>
<path d="M998.300 310v-31.300h15v8.800h24.800v22.500z" fill="none" stroke="#fdfdfd" stroke-width="1.600"/>
<path d="M997.500 312h41.500" stroke="#bdbdbd" stroke-width="1"/>
<circle cx="1029.700" cy="281.200" r="11.800" fill="url(#ggplus)" stroke="#159218" stroke-width=".8"/><path d="M1029.700 274.200v14M1022.700 281.200h14" stroke="#fff" stroke-width="3.200"/>
<path d="M996.500 431v-19.400a1.300 1.300 0 0 1 1.300-1.300h16.600v-3.700a2 2 0 0 1 2-2h15a2 2 0 0 1 2 2v24.400a1.300 1.300 0 0 1-1.300 1.300h-34.300a1.300 1.300 0 0 1-1.300-1.300z" fill="#f3f3f3" stroke="#6f6f6f" stroke-width="1"/>
<path d="M998 430.800v-19h18v-5.700h16v24.700z" fill="none" stroke="#fdfdfd" stroke-width="1.500"/>
<path d="M1002.500 446v-19.400a1.300 1.300 0 0 1 1.300-1.300h17v-3.800a2 2 0 0 1 2-2h15a2 2 0 0 1 2 2v24.500a1.300 1.300 0 0 1-1.300 1.300h-34.700a1.300 1.300 0 0 1-1.300-1.300z" fill="#f4f4f4" stroke="#6f6f6f" stroke-width="1"/>
<path d="M1004 445.800v-19h18.400v-5.800h16v24.800z" fill="none" stroke="#fdfdfd" stroke-width="1.500"/>
<rect x="995.500" y="543.700" width="44.700" height="34.600" fill="#fbfdff" stroke="#c9d6e6" stroke-width=".8"/>
<rect x="997.300" y="545.400" width="41.200" height="31" fill="url(#gsky)"/>
<path d="M1030 548.500l8.500-3.100v6z" fill="#6d8fe0" opacity=".6"/>
<ellipse cx="1013.500" cy="556.200" rx="13.600" ry="11" fill="url(#gbal)"/>
<path d="M1000.500 553c1-5 5-7.400 8.500-7.400-3 3-4.500 8-3.500 13.400-2.800-1-4.800-3-5-6z" fill="#d0582a" opacity=".9"/>
<path d="M1022 546.400c5 1.600 7.600 7 6 12.600-1.400 3-3.600 4.600-6.400 5.400 3-4.600 4-11.600.4-18z" fill="#f2c62a"/>
<path d="M1025.600 549c2.400 2.600 3.200 6.600 2 10.400" stroke="#fff3a8" stroke-width="1.300" fill="none"/>
<path d="M1007 565.400l5.600 2.600 5-3.800-5 6.500z" fill="#111"/>
<ellipse cx="1010.600" cy="574" rx="2.800" ry="2.700" fill="#7a5a1e"/><path d="M1008.500 573.200h4.200" stroke="#c8a53a" stroke-width="1.100"/>
<g fill="none" stroke-linecap="round"><path d="M1014.200 693v4.200q.4 3.400 3.800 5.400q3.800-2 4.200-5.400V680.800a7.500 7.500 0 0 0-15 0V704a10.300 10.300 0 0 0 20.600 0V691" stroke="#959595" stroke-width="3.300"/><path d="M1014.200 693v4.200q.4 3.400 3.800 5.400q3.800-2 4.200-5.400V680.800a7.500 7.500 0 0 0-15 0V704a10.300 10.300 0 0 0 20.600 0V691" stroke="#ececec" stroke-width="1.500"/></g>
<!-- status icons -->
<path d="M605 783.400l7 12.600h-14z" fill="#808080" stroke="#808080" stroke-width="1.200" stroke-linejoin="round"/><path d="M605 787v4.500" stroke="#bdbdbd" stroke-width="1.500"/><circle cx="605" cy="793.600" r=".9" fill="#bdbdbd"/>
<rect x="705" y="783.300" width="14" height="13" rx="1.800" fill="#5a5a5a"/><path d="M708.400 786.200l7.200 7.200M715.600 786.200l-7.200 7.200" stroke="#f3f3f3" stroke-width="2.300"/>
<g stroke-width="1.7" stroke-linecap="round" fill="none"><path d="M1043.9 785.2L1043.9 777.4" stroke="#111"/><path d="M1046.3 785.8L1050.2 779.1" stroke="#111"/><path d="M1048.1 787.6L1054.8 783.7" stroke="#e6e6e6"/><path d="M1048.7 790.0L1056.5 790.0" stroke="#dcdcdc"/><path d="M1048.1 792.4L1054.8 796.3" stroke="#d2d2d2"/><path d="M1046.3 794.2L1050.2 800.9" stroke="#c4c4c4"/><path d="M1043.9 794.8L1043.9 802.6" stroke="#b0b0b0"/><path d="M1041.5 794.2L1037.6 800.9" stroke="#999"/><path d="M1039.7 792.4L1033.0 796.3" stroke="#7a7a7a"/><path d="M1039.1 790.0L1031.3 790.0" stroke="#555"/><path d="M1039.7 787.6L1033.0 783.7" stroke="#3a3a3a"/><path d="M1041.5 785.8L1037.6 779.1" stroke="#222"/></g>
<g fill="#b5b5b5"><rect x="1077" y="794" width="1.500" height="1.500"/><rect x="1074" y="797" width="1.500" height="1.500"/><rect x="1077" y="797" width="1.500" height="1.500"/><rect x="1071" y="800" width="1.500" height="1.500"/><rect x="1074" y="800" width="1.500" height="1.500"/><rect x="1077" y="800" width="1.500" height="1.500"/></g>
</svg>



<div id="frame" class="a"></div>
</div>
</body>
</html>
